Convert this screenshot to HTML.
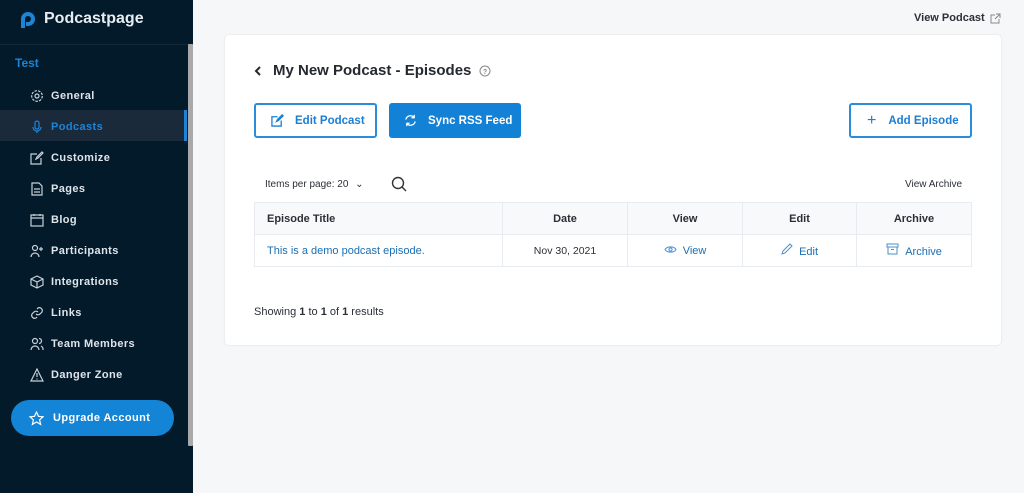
<!DOCTYPE html>
<html><head><meta charset="utf-8">
<style>
*{box-sizing:border-box;margin:0;padding:0}
body{width:1024px;height:493px;overflow:hidden;background:#f6f7f9;font-family:"Liberation Sans",sans-serif;position:relative}
.sb{position:absolute;left:0;top:0;width:193px;height:493px;background:#021a2a}
.logo{position:absolute;left:18px;top:9px;display:flex;align-items:center;gap:6px;color:#e8edf2;font-weight:bold;font-size:16px}
.hr{position:absolute;left:0;top:44px;width:193px;height:1px;background:#14283a}
.thumb{position:absolute;left:188px;top:44px;width:5px;height:402px;background:#a9a9a9;border-radius:1px}
.test{position:absolute;left:15px;top:56px;color:#1d84d6;font-weight:bold;font-size:12px}
.nav{position:absolute;left:0;width:187px;height:31px;display:flex;align-items:center;padding-left:30px;padding-top:2px;color:#dfe4ea;font-weight:bold;font-size:11px;letter-spacing:.4px}
.nav svg{width:14px;height:14px;margin-right:7px;fill:none;stroke:#c9d0d8;stroke-width:1.2}
.nav.act{background:#1a2a3b;color:#1d84d6}
.nav.act svg{stroke:#1d84d6}
.nav.act:after{content:"";position:absolute;right:0;top:0;width:3px;height:31px;background:#1d84d6}
.up{position:absolute;left:11px;top:400px;width:163px;height:36px;border-radius:18px;background:#1384d6;color:#fff;font-weight:bold;font-size:11px;display:flex;align-items:center;padding-left:18px;letter-spacing:.4px}
.up svg{margin-right:9px}
.vp{position:absolute;left:914px;top:12px;font-size:11px;font-weight:bold;color:#2b2f36;display:flex;align-items:center;gap:5px}
.card{position:absolute;left:225px;top:35px;width:776px;height:310px;background:#fff;border-radius:4px;box-shadow:0 0 2px rgba(0,0,0,.12)}
.title{position:absolute;left:253px;top:62px;font-size:15px;font-weight:bold;color:#24282f;display:flex;align-items:center}
.btn{position:absolute;top:103px;height:35px;border-radius:3px;display:flex;align-items:center;font-weight:bold;font-size:11.5px}
.ob{border:2px solid #2a8ddb;color:#1d7ed2;background:#fff}
.fb{background:#1281d6;color:#fff}
.small{position:absolute;font-size:10px;color:#2b2f36}
table{position:absolute;left:254px;top:202px;border-collapse:collapse;font-size:11px}
td,th{border:1px solid #e8ecf1;height:32px;text-align:center}
th{background:#f8f9fb;font-weight:bold;color:#2b2f36;font-size:11px}
td{color:#1a6fb5}
.show{position:absolute;left:254px;top:306px;font-size:11px;color:#2b2f36}
</style></head><body>
<div class="sb">
 <div class="logo"><svg width="20" height="20" viewBox="0 0 20 20"><path d="M3 19V10a7 7 0 1 1 7 7H8v-4h2a3 3 0 1 0-3-3v9z" fill="#1d84d6"/></svg>Podcastpage</div>
 <div class="hr"></div>
 <div class="test">Test</div>
 <div class="nav" style="top:79px"><svg viewBox="0 0 14 14"><circle cx="7" cy="7" r="2"/><circle cx="7" cy="7" r="5.3" stroke-dasharray="2.5 1.2"/></svg>General</div>
 <div class="nav act" style="top:110px"><svg viewBox="0 0 14 14"><rect x="5" y="1" width="4" height="8" rx="2"/><path d="M3 7a4 4 0 0 0 8 0M7 11v2"/></svg>Podcasts</div>
 <div class="nav" style="top:141px"><svg viewBox="0 0 14 14"><path d="M11 7v6H1V3h6M6 8l1-2 5-5 1 1-5 5z"/></svg>Customize</div>
 <div class="nav" style="top:172px"><svg viewBox="0 0 14 14"><path d="M2 1h7l3 3v9H2zM4 7h6M4 10h6"/></svg>Pages</div>
 <div class="nav" style="top:203px"><svg viewBox="0 0 14 14"><rect x="1" y="2" width="12" height="11"/><path d="M1 5h12M4 1v2M10 1v2"/></svg>Blog</div>
 <div class="nav" style="top:234px"><svg viewBox="0 0 14 14"><circle cx="5" cy="4" r="2.5"/><path d="M1 13a4 4 0 0 1 8 0M11 3v4M9 5h4"/></svg>Participants</div>
 <div class="nav" style="top:265px"><svg viewBox="0 0 14 14"><path d="M7 1l6 3v6l-6 3-6-3V4zM1 4l6 3 6-3M7 7v6"/></svg>Integrations</div>
 <div class="nav" style="top:296px"><svg viewBox="0 0 14 14"><path d="M6 8a3 3 0 0 0 4 0l2-2a3 3 0 0 0-4-4l-1 1M8 6a3 3 0 0 0-4 0L2 8a3 3 0 0 0 4 4l1-1"/></svg>Links</div>
 <div class="nav" style="top:327px"><svg viewBox="0 0 14 14"><circle cx="5" cy="4" r="2.5"/><path d="M1 13a4 4 0 0 1 8 0M9 1.5a2.5 2.5 0 0 1 0 5M11 9a4 4 0 0 1 2 4"/></svg>Team Members</div>
 <div class="nav" style="top:358px"><svg viewBox="0 0 14 14"><path d="M7 1l6 12H1zM7 5v4M7 10.5v1"/></svg>Danger Zone</div>
 <div class="up"><svg width="15" height="15" viewBox="0 0 15 15" fill="none" stroke="#fff" stroke-width="1.2"><path d="M7.5 1l2 4.3 4.5.5-3.4 3 1 4.6-4.1-2.4-4.1 2.4 1-4.6L1 5.8l4.5-.5z"/></svg>Upgrade Account</div>
 <div class="thumb"></div>
</div>
<div class="vp">View Podcast <svg width="11" height="11" viewBox="0 0 11 11" fill="none" stroke="#888" stroke-width="1"><path d="M9 6v4H1V2h4M6 1h4v4M10 1L5 6"/></svg></div>
<div class="card"></div>
<div class="title"><svg width="10" height="12" viewBox="0 0 10 12" fill="none" stroke="#24282f" stroke-width="2"><path d="M7 2L3 6l4 4"/></svg><span style="margin-left:10px">My New Podcast - Episodes</span><svg style="margin-left:8px" width="12" height="12" viewBox="0 0 12 12" fill="none" stroke="#888" stroke-width="1"><circle cx="6" cy="6" r="5"/><text x="6" y="9" font-size="7" text-anchor="middle" fill="#888" stroke="none" font-family="Liberation Sans">?</text></svg></div>
<div class="btn ob" style="left:254px;width:123px;padding-left:15px"><svg width="13" height="13" viewBox="0 0 14 14" fill="none" stroke="#1d7ed2" stroke-width="1.4"><path d="M11 7v6H1V3h6M6 8l1-2 5-5 1 1-5 5z"/></svg><span style="margin-left:11px">Edit Podcast</span></div>
<div class="btn fb" style="left:389px;width:132px;padding-left:15px"><svg width="13" height="13" viewBox="0 0 14 14" fill="none" stroke="#fff" stroke-width="1.4"><path d="M2 6a5 5 0 0 1 9-2M12 8a5 5 0 0 1-9 2M11 1v3H8M3 13v-3h3"/></svg><span style="margin-left:11px">Sync RSS Feed</span></div>
<div class="btn ob" style="left:849px;width:123px;padding-left:16px"><span style="font-size:16px;font-weight:normal">+</span><span style="margin-left:12px">Add Episode</span></div>
<div class="small" style="left:265px;top:179px">Items per page: 20 <span style="margin-left:4px">&#8964;</span></div>
<svg style="position:absolute;left:391px;top:176px" width="17" height="17" viewBox="0 0 17 17" fill="none" stroke="#333" stroke-width="1.4"><circle cx="7" cy="7" r="5.5"/><path d="M11 11l4 4"/></svg>
<div class="small" style="left:905px;top:179px">View Archive</div>
<table>
<tr><th style="width:248px;text-align:left;padding-left:12px">Episode Title</th><th style="width:125px">Date</th><th style="width:115px">View</th><th style="width:114px">Edit</th><th style="width:115px">Archive</th></tr>
<tr><td style="text-align:left;padding-left:12px">This is a demo podcast episode.</td><td style="color:#2b2f36;font-size:10.5px">Nov 30, 2021</td>
<td><svg width="13" height="9" viewBox="0 0 13 9" fill="none" stroke="#4a8fcc" stroke-width="1"><path d="M1 4.5C3 1 10 1 12 4.5 10 8 3 8 1 4.5z"/><circle cx="6.5" cy="4.5" r="1.6"/></svg>&nbsp;&nbsp;View</td>
<td><svg width="12" height="12" viewBox="0 0 12 12" fill="none" stroke="#4a8fcc" stroke-width="1"><path d="M1 11l1-3 7-7 2 2-7 7z"/></svg>&nbsp;&nbsp;Edit</td>
<td><svg width="13" height="12" viewBox="0 0 13 12" fill="none" stroke="#4a8fcc" stroke-width="1"><path d="M1 1h11v3H1zM2 4v7h9V4M5 6.5h3"/></svg>&nbsp;&nbsp;Archive</td></tr>
</table>
<div class="show">Showing <b>1</b> to <b>1</b> of <b>1</b> results</div>
</body></html>
